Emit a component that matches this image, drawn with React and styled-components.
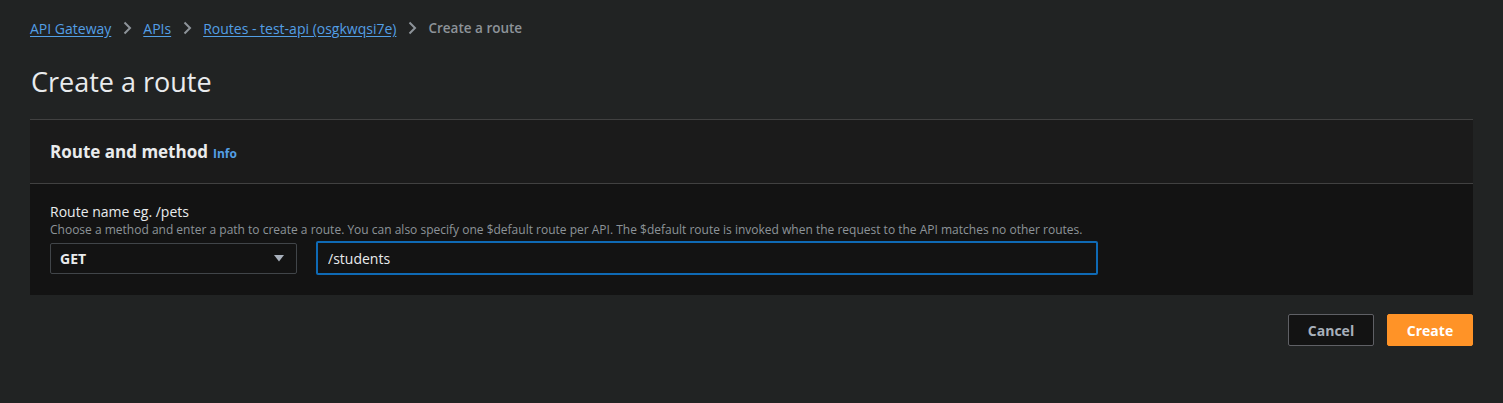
import React, { useState } from 'react'
import styled, { createGlobalStyle } from 'styled-components'

const GlobalStyle = createGlobalStyle`
    html, body {
        margin: 0;
        padding: 0;
        background: #212323;
        font-family: "Open Sans", "Noto Sans", sans-serif;
        color: #e9ebed;
    }
`

function Chevron() {
    return (
        <svg width="16" height="16" viewBox="0 0 16 16" fill="none">
            <path d="M5.5 2.5L11 8l-5.5 5.5" stroke="#8d9399" strokeWidth="2" />
        </svg>
    )
}

function Caret() {
    return (
        <svg width="12" height="12" viewBox="0 0 12 12">
            <path d="M1 3h10L6 9.5z" fill="#a8b0bb" />
        </svg>
    )
}

function App() {
    const [method, setMethod] = useState('GET')
    const [path, setPath] = useState('/students')

    return (
        <Page>
            <GlobalStyle />
            <Crumbs>
                <CrumbLink href="#">API Gateway</CrumbLink>
                <Chevron />
                <CrumbLink href="#">APIs</CrumbLink>
                <Chevron />
                <CrumbLink href="#">Routes - test-api (osgkwqsi7e)</CrumbLink>
                <Chevron />
                <Current>Create a route</Current>
            </Crumbs>

            <Title>Create a route</Title>

            <Card>
                <CardHeader>
                    <h2>Route and method</h2>
                    <InfoLink href="#">Info</InfoLink>
                </CardHeader>
                <CardBody>
                    <Label>Route name eg. /pets</Label>
                    <Hint>
                        Choose a method and enter a path to create a route. You can also specify one $default route per API. The $default route is invoked when the request to the API matches no other routes.
                    </Hint>
                    <Fields>
                        <Select>
                            <span>{method}</span>
                            <Caret />
                        </Select>
                        <PathInput value={path} onChange={(e) => setPath(e.target.value)} />
                    </Fields>
                </CardBody>
            </Card>

            <Actions>
                <Button>Cancel</Button>
                <Button primary>Create</Button>
            </Actions>
        </Page>
    )
}

const Page = styled.div`
    padding: 18px 30px 40px 30px;
`

const Crumbs = styled.nav`
    display: flex;
    align-items: center;
    gap: 8px;
    font-size: 14px;
    height: 20px;
`

const CrumbLink = styled.a`
    color: #539fe5;
    text-decoration: underline;
    text-underline-offset: 2px;
`

const Current = styled.span`
    color: #8d9399;
    font-weight: 600;
    font-size: 13.5px;
`

const Title = styled.h1`
    margin: 0;
    padding: 27px 0 20px 1px;
    font-size: 27px;
    font-weight: 400;
    line-height: 34px;
    color: #e9ebed;
`

const Card = styled.section`
    border-top: 1px solid #414141;
    background: #131313;
`

const CardHeader = styled.div`
    display: flex;
    gap: 5px;
    height: 64px;
    padding: 0 20px;
    box-sizing: border-box;
    align-items: center;
    background: #1b1b1b;
    border-bottom: 1px solid #414141;
    h2{
        margin: 0;
        font-size: 17px;
        font-weight: 700;
        color: #e9ebed;
    }
`

const InfoLink = styled.a`
    color: #539fe5;
    font-size: 12px;
    font-weight: 700;
    text-decoration: none;
    margin-top: 3px;
`

const CardBody = styled.div`
    padding: 19px 20px 20px 20px;
`

const Label = styled.div`
    font-size: 14px;
    line-height: 18px;
    color: #e9ebed;
`

const Hint = styled.div`
    font-size: 12px;
    line-height: 17px;
    color: #8d9399;
    white-space: nowrap;
`

const Fields = styled.div`
    display: flex;
    align-items: center;
    gap: 19px;
    margin-top: 3px;
`

const Select = styled.div`
    display: flex;
    align-items: center;
    justify-content: space-between;
    box-sizing: border-box;
    width: 247px;
    height: 31px;
    padding: 0 11px 0 9px;
    border: 1px solid #414549;
    border-radius: 2px;
    font-size: 14px;
    font-weight: 700;
    color: #e9ebed;
`

const PathInput = styled.input`
    box-sizing: border-box;
    width: 782px;
    height: 34px;
    padding: 0 10px;
    background: #131313;
    border: 2px solid #0f6ab5;
    border-radius: 2px;
    font-family: inherit;
    font-size: 14px;
    color: #e9ebed;
    outline: none;
`

const Actions = styled.div`
    display: flex;
    justify-content: flex-end;
    gap: 13px;
    margin-top: 19px;
`

const Button = styled.button`
    box-sizing: border-box;
    width: 86px;
    height: 32px;
    border-radius: 2px;
    font-family: inherit;
    font-size: 14px;
    font-weight: 700;
    border: 1px solid ${(p) => (p.primary ? '#ff9327' : '#5f6065')};
    background: ${(p) => (p.primary ? '#ff9327' : '#131313')};
    color: ${(p) => (p.primary ? '#ffffff' : '#a8b0bb')};
`

export default App
